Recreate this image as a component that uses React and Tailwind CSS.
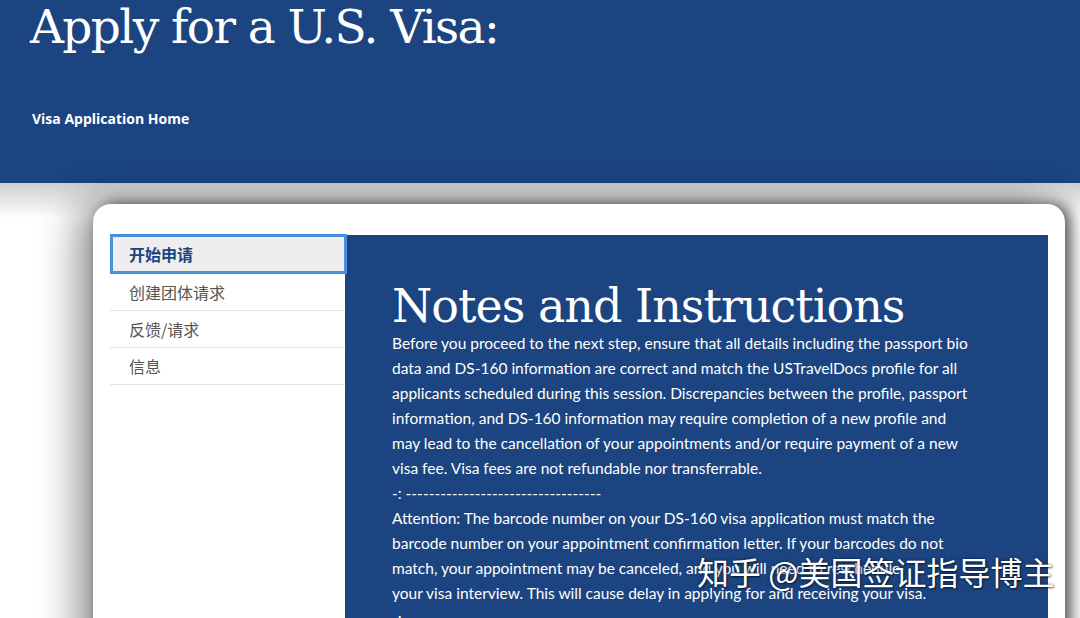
import React from 'react';

const NAV = ['创建团体请求', '反馈/请求', '信息'];

const NOTES = [
     'Before you proceed to the next step, ensure that all details including the passport bio',
     'data and DS-160 information are correct and match the USTravelDocs profile for all',
     'applicants scheduled during this session. Discrepancies between the profile, passport',
     'information, and DS-160 information may require completion of a new profile and',
     'may lead to the cancellation of your appointments and/or require payment of a new',
     'visa fee. Visa fees are not refundable nor transferrable.',
     '-: ----------------------------------',
     'Attention: The barcode number on your DS-160 visa application must match the',
     'barcode number on your appointment confirmation letter. If your barcodes do not',
     'match, your appointment may be canceled, and you will need to reschedule',
     'your visa interview. This will cause delay in applying for and receiving your visa.',
     '-:',
];

const serif = { fontFamily: '"DejaVu Serif", "Liberation Serif", serif' };

export default function App() {
     return (
          <div className="relative w-[1080px] h-[618px] overflow-hidden bg-white" style={{ fontFamily: 'Lato, "Noto Sans", "Noto Sans CJK SC", sans-serif' }}>
               <header className="h-[183px] bg-[#1b4480] pl-[30px] pt-[1px] text-white">
                    <h1 className="text-[47px] leading-[52px] tracking-[-1.6px]" style={serif}>Apply for a U.S. Visa:</h1>
                    <p className="mt-[55px] pl-[2px] text-[14px] font-bold" style={{ fontFamily: '"Open Sans", sans-serif' }}>Visa Application Home</p>
               </header>

               <main className="h-[435px] bg-gradient-to-b from-[#cfcfcf] via-white via-[8%] to-white pl-[93px] pr-[15px] pt-[21px]">
                    <div className="h-[500px] rounded-[18px] bg-white pl-[17px] pr-[17px] pt-[30px] flex shadow-[-14px_0_40px_rgba(0,0,0,0.45),6px_0_14px_rgba(0,0,0,0.6)]">
                         <nav className="w-[235px] shrink-0">
                              <div className="h-[40px] flex items-center pl-[16px] bg-[#eeeeee] border-[3px] border-[#4a90e2] text-[#1b4480] font-bold text-[16px] relative z-10 -mr-[2px]" style={{ fontFamily: '"Noto Sans CJK SC", sans-serif' }}>开始申请</div>
                              {NAV.map(label => (
                                   <div key={label} className="h-[37px] flex items-center pl-[19px] border-b border-[#e4e4e4] text-[#555555] text-[16px]" style={{ fontFamily: '"Noto Sans CJK SC", sans-serif' }}>
                                        {label}
                                   </div>
                              ))}
                         </nav>

                         <section className="flex-1 mt-[1px] bg-[#1b4480] pl-[47px] pt-[45px] text-white">
                              <h2 className="text-[46px] leading-[52px] tracking-[-1px]" style={serif}>Notes and Instructions</h2>
                              <div className="-mt-[1px] text-[15.5px] leading-[25px]">
                                   {NOTES.map((line, i) => (
                                        <div key={i} className="whitespace-nowrap">{line}</div>
                                   ))}
                              </div>
                         </section>
                    </div>
               </main>

               <div className="absolute left-[697px] top-[552px] text-[32px] leading-[38px] text-white whitespace-nowrap [text-shadow:0_0_3px_rgba(0,0,0,0.6),1px_1px_2px_rgba(0,0,0,0.5)]" style={{ fontFamily: '"Noto Sans CJK SC", sans-serif' }}>
                    知乎 @美国签证指导博主
               </div>
          </div>
     );
}
